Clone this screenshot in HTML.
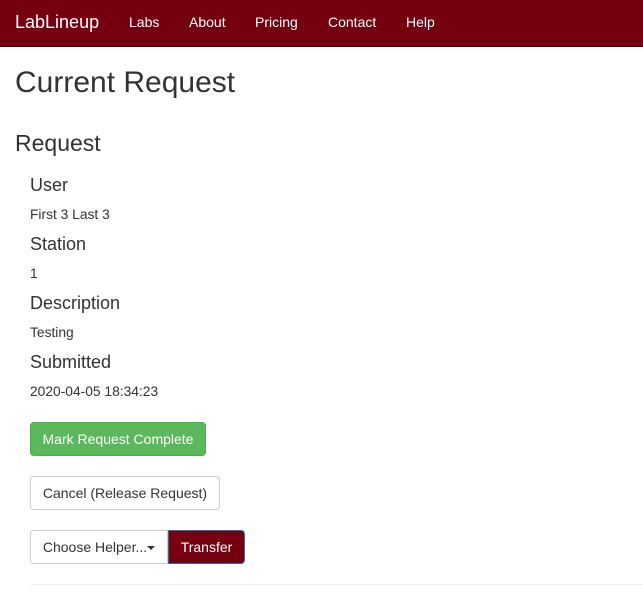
<!DOCTYPE html>
<html><head><style>
*{box-sizing:border-box}
body{margin:0;width:643px;height:605px;overflow:hidden;font-family:"Liberation Sans",sans-serif;color:#333;background:#fff}
.nav{position:absolute;left:0;top:0;width:643px;height:47px;background:#740010;border-bottom:1px solid #4a000a}
.nav span{position:absolute;top:14px;color:#fff;font-size:14px}
.abs{position:absolute;white-space:nowrap}
.btn{position:absolute;border-radius:4px;font-size:14px;text-align:center;line-height:32px;height:34px}
</style></head><body>
<div class="nav">
<span style="left:15px;font-size:18px;top:12px">LabLineup</span>
<span style="left:129px">Labs</span>
<span style="left:189px">About</span>
<span style="left:255px">Pricing</span>
<span style="left:328px">Contact</span>
<span style="left:406px">Help</span>
</div>
<div class="abs" style="left:15px;top:66px;font-size:30px">Current Request</div>
<div class="abs" style="left:15px;top:130px;font-size:23px">Request</div>
<div class="abs" style="left:30px;top:175px;font-size:18px">User</div>
<div class="abs" style="left:30px;top:207px;font-size:13.8px">First 3 Last 3</div>
<div class="abs" style="left:30px;top:234px;font-size:18px">Station</div>
<div class="abs" style="left:30px;top:266px;font-size:13.8px">1</div>
<div class="abs" style="left:30px;top:293px;font-size:18px">Description</div>
<div class="abs" style="left:30px;top:325px;font-size:13.8px">Testing</div>
<div class="abs" style="left:30px;top:352px;font-size:18px">Submitted</div>
<div class="abs" style="left:30px;top:384px;font-size:13.8px">2020-04-05 18:34:23</div>
<div class="btn" style="left:30px;top:422px;width:176px;background:#5cb85c;border:1px solid #4cae4c;color:#fff">Mark Request Complete</div>
<div class="btn" style="left:30px;top:476px;width:190px;border:1px solid #ccc">Cancel (Release Request)</div>
<div class="btn" style="left:30px;top:530px;width:138px;border:1px solid #ccc;border-radius:4px 0 0 4px">Choose Helper...<span style="display:inline-block;width:0;height:0;border-left:4px solid transparent;border-right:4px solid transparent;border-top:4px solid #333;vertical-align:middle"></span></div>
<div class="btn" style="left:168px;top:530px;width:77px;background:#740010;border:1px solid #2e6da4;color:#fff;border-radius:0 4px 4px 0">Transfer</div>
<div class="abs" style="left:30px;top:584px;width:613px;height:1px;background:#eee"></div>
</body></html>
